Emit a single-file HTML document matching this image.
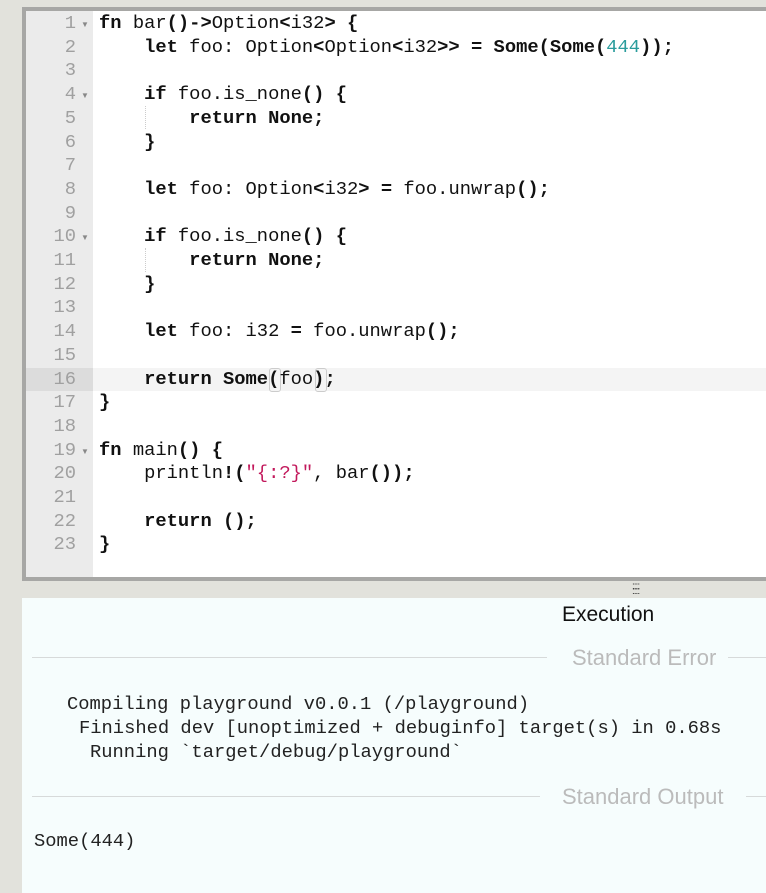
<!DOCTYPE html>
<html><head><meta charset="utf-8"><style>
body{margin:0;width:766px;height:893px;background:#e2e2dc;position:relative;overflow:hidden;font-family:"Liberation Sans",sans-serif}
.ed{position:absolute;left:22px;top:7px;width:760px;height:566px;border:4px solid #a7a7a5;border-right:none;background:#fff}
.gut{position:absolute;left:0;top:0;width:67px;height:100%;background:#ebebeb}
.ln{position:absolute;left:0;height:23.7px;line-height:23.7px;font-family:"Liberation Mono",monospace;font-size:18.8px}
.num{width:50px;text-align:right;color:#a0a0a0;top:1px}
.fold{position:absolute;left:55px;color:#888;font-size:8px}
.code{left:73px;white-space:pre;color:#111}
b{font-weight:bold}
.n{color:#2a9c9c}.s{color:#c2185b}
.hl{position:absolute;left:0;width:760px;height:23.7px;background:#f4f4f4}
.hlg{position:absolute;left:0;width:67px;height:23.7px;background:#dcdcdc}
.guide{position:absolute;left:119px;width:0;height:23.7px;border-left:1px dotted #ccc}
.br{position:absolute;width:10px;height:22px;border:1px solid #ccc;border-radius:3px}
.out{position:absolute;left:22px;top:598px;width:744px;height:295px;background:#f6fdfd}
.mono{position:absolute;font-family:"Liberation Mono",monospace;font-size:18.8px;white-space:pre;color:#222}
.sec{position:absolute;height:1px;background:#d7dada}
.lab{position:absolute;color:#bbb;font-size:22px}
</style></head><body>
<div class="ed">
<div class="gut"></div>
<div class="hl" style="top:356.5px"></div><div class="hlg" style="top:356.5px"></div>
<div class="guide" style="top:94.8px"></div>
<div class="guide" style="top:236.9px"></div>
<div class="br" style="left:243px;top:357px"></div>
<div class="br" style="left:289px;top:357px"></div>
<div id="g"></div>
</div>
<div style="position:absolute;left:632px;top:584px;font-size:10px;letter-spacing:-1px;color:#333;line-height:5px">::::<br>::::</div>
<div class="out">
<div style="position:absolute;left:540px;top:5px;font-size:21px;color:#111">Execution</div>
<div class="sec" style="left:10px;top:59px;width:515px"></div>
<div class="lab" style="left:550px;top:47px">Standard Error</div>
<div class="sec" style="left:706px;top:59px;width:40px"></div>
<div class="mono" style="left:45px;top:95px">Compiling playground v0.0.1 (/playground)</div>
<div class="mono" style="left:57px;top:119px">Finished dev [unoptimized + debuginfo] target(s) in 0.68s</div>
<div class="mono" style="left:68px;top:143px">Running `target/debug/playground`</div>
<div class="sec" style="left:10px;top:198px;width:508px"></div>
<div class="lab" style="left:540px;top:186px">Standard Output</div>
<div class="sec" style="left:724px;top:198px;width:20px"></div>
<div class="mono" style="left:12px;top:232px">Some(444)</div>
</div>
<script>
var L=['<b>fn</b> bar<b>()-></b>Option<b>&lt;</b>i32<b>></b> <b>{</b>',
'    <b>let</b> foo: Option<b>&lt;</b>Option<b>&lt;</b>i32<b>>></b> <b>=</b> <b>Some(Some(</b><span class="n">444</span><b>));</b>',
'',
'    <b>if</b> foo.is_none<b>()</b> <b>{</b>',
'        <b>return</b> <b>None;</b>',
'    <b>}</b>',
'',
'    <b>let</b> foo: Option<b>&lt;</b>i32<b>></b> <b>=</b> foo.unwrap<b>();</b>',
'',
'    <b>if</b> foo.is_none<b>()</b> <b>{</b>',
'        <b>return</b> <b>None;</b>',
'    <b>}</b>',
'',
'    <b>let</b> foo: i32 <b>=</b> foo.unwrap<b>();</b>',
'',
'    <b>return</b> <b>Some(</b>foo<b>);</b>',
'<b>}</b>',
'',
'<b>fn</b> main<b>()</b> <b>{</b>',
'    println<b>!(</b><span class="s">"{:?}"</span>, bar<b>());</b>',
'',
'    <b>return</b> <b>();</b>',
'<b>}</b>'];
var h='',folds=[1,4,10,19];
for(var i=0;i<L.length;i++){var t=i*23.7+1;
h+='<div class="ln num" style="top:'+t+'px">'+(i+1)+'</div>';
if(folds.indexOf(i+1)>=0)h+='<div class="fold" style="top:'+(t+8)+'px">&#9660;</div>';
h+='<div class="ln code" style="top:'+t+'px">'+L[i]+'</div>';}
document.getElementById('g').innerHTML=h;
</script>
</body></html>
